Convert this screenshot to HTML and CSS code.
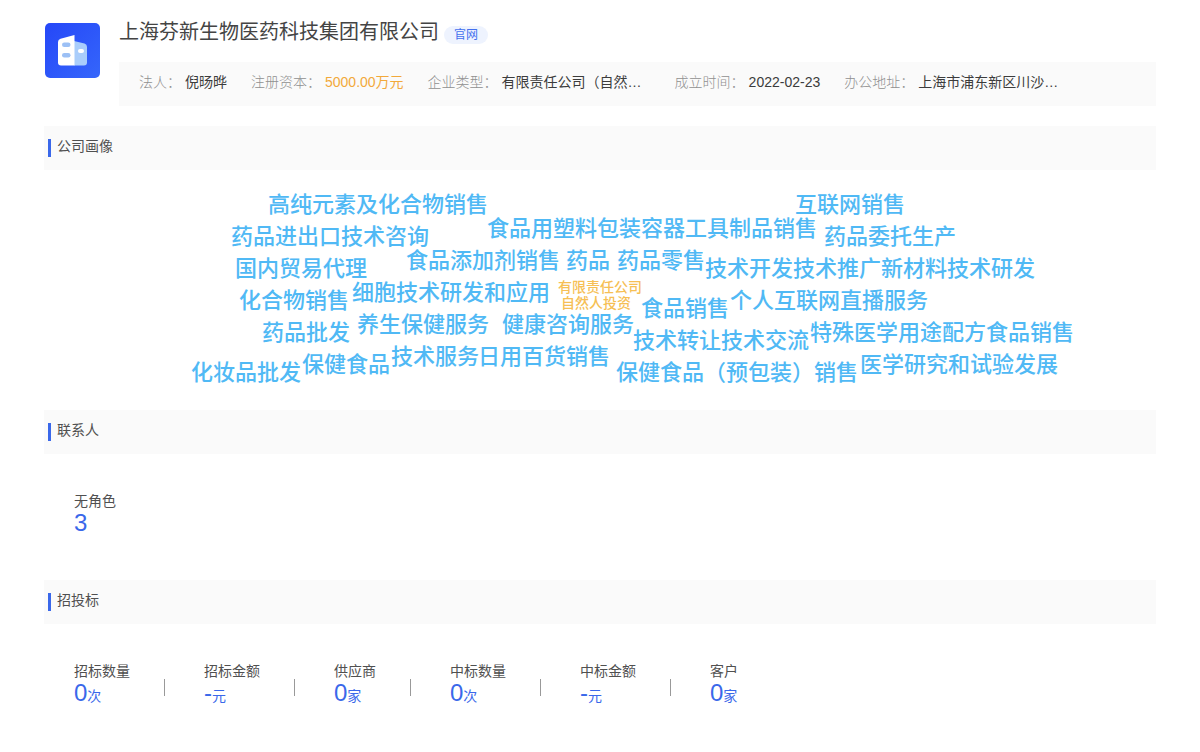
FILE: index.html
```html
<!DOCTYPE html>
<html lang="zh-CN">
<head>
<meta charset="utf-8">
<meta name="viewport" content="width=device-width, initial-scale=1">
<title>上海芬新生物医药科技集团有限公司</title>
<link rel="stylesheet" href="styles.css">
</head>
<body>
<main class="page">
  <header class="company">
    <svg class="logo" viewBox="0 0 55 55" aria-hidden="true">
      <defs>
        <linearGradient id="logo-bg" x1="0" y1="0" x2="1" y2="1">
          <stop offset="0" stop-color="#2547f8"/>
          <stop offset="1" stop-color="#3566fb"/>
        </linearGradient>
      </defs>
      <rect width="55" height="55" rx="5" fill="url(#logo-bg)"/>
      <path d="M29 18 39.500 20.500Q42 21.200 42 24V39.500Q42 42.500 39 42.500H29Z" fill="#a9cdfb"/>
      <path d="M13 19Q13 16.500 15.500 15.700L29.500 12V42.500H16Q13 42.500 13 39.500Z" fill="#fff"/>
      <rect x="17" y="19.500" width="8.500" height="4.500" rx="2.200" fill="#9cc0f5"/>
      <rect x="17" y="30" width="8.500" height="4.500" rx="2.200" fill="#9cc0f5"/>
      <rect x="33" y="26" width="6" height="4" rx="2" fill="#fff"/>
    </svg>
    <div class="company-main">
      <div class="title-row">
        <h1 class="title">上海芬新生物医药科技集团有限公司</h1>
        <a class="site-link" href="#">官网</a>
      </div>
      <dl class="facts">
        <div class="fact"><dt>法人：</dt><dd>倪旸晔</dd></div>
        <div class="fact"><dt>注册资本：</dt><dd class="money">5000.00万元</dd></div>
        <div class="fact"><dt>企业类型：</dt><dd class="long">有限责任公司（自然…</dd></div>
        <div class="fact"><dt>成立时间：</dt><dd>2022-02-23</dd></div>
        <div class="fact"><dt>办公地址：</dt><dd class="long">上海市浦东新区川沙…</dd></div>
      </dl>
    </div>
  </header>

  <section>
    <h2 class="section-title">公司画像</h2>
    <div class="cloud">
      <span class="word w1">高纯元素及化合物销售</span>
      <span class="word w2">互联网销售</span>
      <span class="word w3">食品用塑料包装容器工具制品销售</span>
      <span class="word w4">药品进出口技术咨询</span>
      <span class="word w5">药品委托生产</span>
      <span class="word w6">食品添加剂销售</span>
      <span class="word w7">药品</span>
      <span class="word w8">药品零售</span>
      <span class="word w9">国内贸易代理</span>
      <span class="word w10">技术开发</span>
      <span class="word w11">技术推广</span>
      <span class="word w12">新材料技术研发</span>
      <span class="word w13">细胞技术研发和应用</span>
      <span class="word w14">化合物销售</span>
      <span class="word small w15">有限责任公司</span>
      <span class="word small w16">自然人投资</span>
      <span class="word w17">食品销售</span>
      <span class="word w18">个人互联网直播服务</span>
      <span class="word w19">养生保健服务</span>
      <span class="word w20">健康咨询服务</span>
      <span class="word w21">药品批发</span>
      <span class="word w22">技术转让</span>
      <span class="word w23">技术交流</span>
      <span class="word w24">特殊医学用途配方食品销售</span>
      <span class="word w25">技术服务</span>
      <span class="word w26">日用百货销售</span>
      <span class="word w27">保健食品</span>
      <span class="word w28">化妆品批发</span>
      <span class="word w29">保健食品（预包装）销售</span>
      <span class="word w30">医学研究和试验发展</span>
    </div>
  </section>

  <section>
    <h2 class="section-title">联系人</h2>
    <dl class="stats contacts">
      <div class="stat"><dt>无角色</dt><dd><span class="num">3</span></dd></div>
    </dl>
  </section>

  <section>
    <h2 class="section-title">招投标</h2>
    <dl class="stats">
      <div class="stat"><dt>招标数量</dt><dd><span class="num">0</span>次</dd></div>
      <div class="stat"><dt>招标金额</dt><dd><span class="num">-</span>元</dd></div>
      <div class="stat"><dt>供应商</dt><dd><span class="num">0</span>家</dd></div>
      <div class="stat"><dt>中标数量</dt><dd><span class="num">0</span>次</dd></div>
      <div class="stat"><dt>中标金额</dt><dd><span class="num">-</span>元</dd></div>
      <div class="stat"><dt>客户</dt><dd><span class="num">0</span>家</dd></div>
    </dl>
  </section>
</main>
</body>
</html>
```
FILE: styles.css
```css
* { box-sizing: border-box; }

body {
  margin: 0;
  background: #fff;
  color: #505050;
  font-family: "Liberation Sans", "Noto Sans CJK SC", sans-serif;
  font-size: 14px;
  font-weight: 400;
  line-height: 20px;
}

h1, h2, dl, dd { margin: 0; font-weight: inherit; }

.page { padding: 18px 44px; }

.company {
  display: flex;
  gap: 19px;
  margin-bottom: 20px;
}
.logo {
  flex: none;
  width: 55px;
  height: 55px;
  margin: 5px 0 0 1px;
}
.company-main { flex: 1; min-width: 0; }

.title-row {
  display: flex;
  align-items: center;
  gap: 5px;
  height: 44px;
  padding-bottom: 16px;
}
.title { color: #444; font-size: 20px; line-height: 28px; }
.site-link {
  margin-top: 6px;
  padding: 0 10px;
  border-radius: 9px;
  background: #eef3fe;
  color: #4470ee;
  font-size: 12px;
  line-height: 18px;
  text-decoration: none;
}

.facts {
  display: flex;
  gap: 24px;
  padding: 10px 20px 14px;
  background: #fafafa;
  color: #3c3c3c;
  white-space: nowrap;
}
.fact { display: flex; gap: 4px; }
.fact dt { color: #909090; font-weight: 300; }
.fact .money { color: #f2a93b; }
.fact .long { width: 149px; }

.section-title {
  display: flex;
  align-items: flex-start;
  gap: 6px;
  height: 44px;
  padding: 10px 4px;
  background: #fafafa;
  font-size: 14px;
}
.section-title::before {
  content: "";
  width: 3px;
  height: 18px;
  margin-top: 3px;
  background: #3a68ea;
}

/* Word cloud canvas */
.cloud {
  position: relative;
  width: 900px;
  height: 240px;
  margin: 0 auto;
}
.word {
  position: absolute;
  color: #50b9f5;
  font-size: 22px;
  font-weight: 500;
  line-height: 26px;
  white-space: nowrap;
}
.small {
  color: #f6bf55;
  font-size: 14px;
  line-height: 16px;
}
.w1 { left: 118px; top: 22px; }
.w2 { left: 645px; top: 22px; }
.w3 { left: 337px; top: 46px; }
.w4 { left: 81px; top: 54px; }
.w5 { left: 674px; top: 54px; }
.w6 { left: 256px; top: 78px; }
.w7 { left: 416px; top: 78px; }
.w8 { left: 467px; top: 78px; }
.w9 { left: 85px; top: 86px; }
.w10 { left: 555px; top: 86px; }
.w11 { left: 643px; top: 86px; }
.w12 { left: 731px; top: 86px; }
.w13 { left: 202px; top: 110px; }
.w14 { left: 89px; top: 118px; }
.w15 { left: 408px; top: 109px; }
.w16 { left: 411px; top: 125px; }
.w17 { left: 491px; top: 126px; }
.w18 { left: 580px; top: 118px; }
.w19 { left: 207px; top: 142px; }
.w20 { left: 352px; top: 142px; }
.w21 { left: 112px; top: 150px; }
.w22 { left: 483px; top: 158px; }
.w23 { left: 571px; top: 158px; }
.w24 { left: 660px; top: 150px; }
.w25 { left: 241px; top: 174px; }
.w26 { left: 328px; top: 174px; }
.w27 { left: 152px; top: 182px; }
.w28 { left: 41px; top: 190px; }
.w29 { left: 466px; top: 190px; }
.w30 { left: 710px; top: 182px; }

.stats {
  display: flex;
  padding: 37px 30px 0;
}
.contacts { height: 126px; }
.stat + .stat {
  margin-left: 34px;
  padding-left: 40px;
  background: linear-gradient(#999, #999) no-repeat 0 18px / 1px 17px;
}
.stat dd {
  color: #3a68ea;
  line-height: 24px;
  white-space: nowrap;
}
.num { font-size: 24px; }
```
